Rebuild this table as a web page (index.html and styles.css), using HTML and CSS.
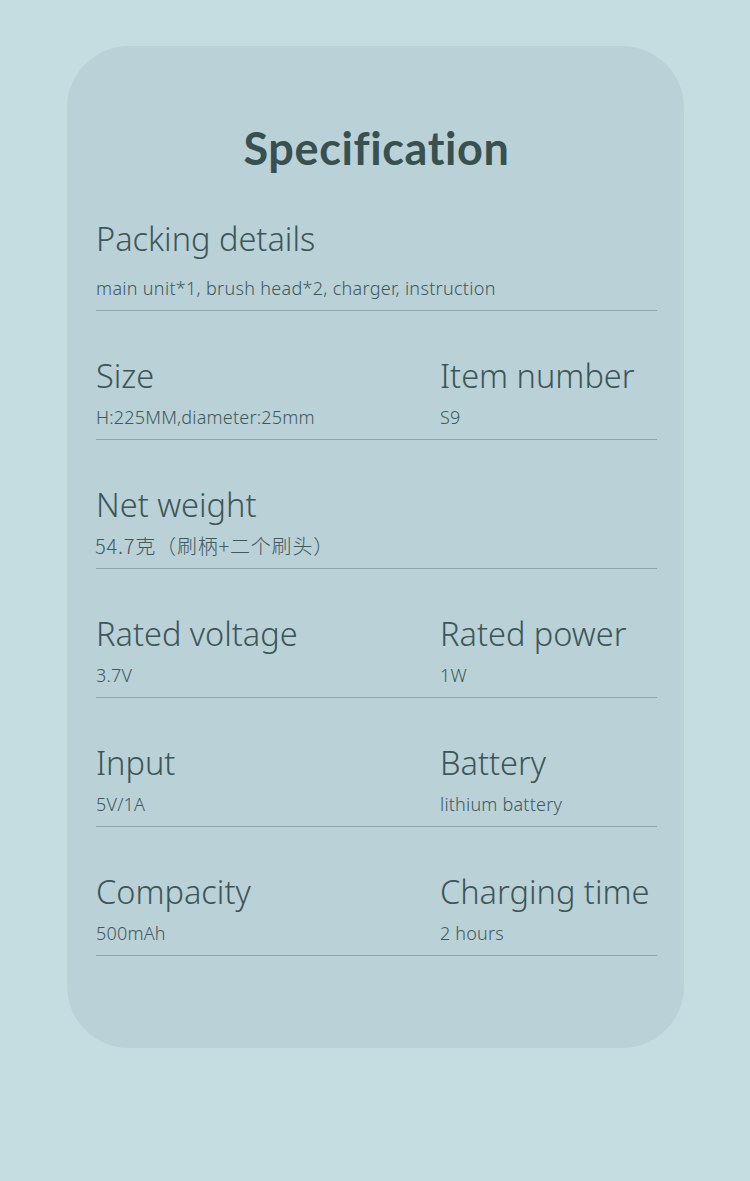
FILE: index.html
```html
<!DOCTYPE html>
<html lang="en">
<head>
<meta charset="utf-8">
<title>Specification</title>
<link rel="stylesheet" href="styles.css">
</head>
<body>
<main class="card">
  <h1 class="title">Specification</h1>
  <section class="row row-first">
    <div class="cell cell-wide">
      <div class="label">Packing details</div>
      <div class="value value-pack">main unit*1, brush head*2, charger, instruction</div>
    </div>
  </section>
  <section class="row">
    <div class="cell">
      <div class="label">Size</div>
      <div class="value">H:225MM,diameter:25mm</div>
    </div>
    <div class="cell">
      <div class="label">Item number</div>
      <div class="value">S9</div>
    </div>
  </section>
  <section class="row">
    <div class="cell cell-wide">
      <div class="label">Net weight</div>
      <div class="value cjk">54.7克（刷柄+二个刷头）</div>
    </div>
  </section>
  <section class="row">
    <div class="cell">
      <div class="label">Rated voltage</div>
      <div class="value">3.7V</div>
    </div>
    <div class="cell">
      <div class="label">Rated power</div>
      <div class="value">1W</div>
    </div>
  </section>
  <section class="row">
    <div class="cell">
      <div class="label">Input</div>
      <div class="value">5V/1A</div>
    </div>
    <div class="cell">
      <div class="label">Battery</div>
      <div class="value">lithium battery</div>
    </div>
  </section>
  <section class="row">
    <div class="cell">
      <div class="label">Compacity</div>
      <div class="value">500mAh</div>
    </div>
    <div class="cell">
      <div class="label">Charging time</div>
      <div class="value">2 hours</div>
    </div>
  </section>
</main>
</body>
</html>
```

FILE: styles.css
```css
html, body {
  margin: 0;
  padding: 0;
}
body {
  background: #c5dce0;
  width: 750px;
  height: 1181px;
  overflow: hidden;
  padding-top: 46px;
  box-sizing: border-box;
  font-family: "Noto Sans", "Noto Sans CJK SC", sans-serif;
  color: #3b5457;
}
.card {
  margin-left: 67px;
  width: 617px;
  height: 1002px;
  box-sizing: border-box;
  background: #b9d1d7;
  border-radius: 62px;
  padding: 0 27px 0 29px;
}
.title {
  margin: 0;
  padding-top: 72px;
  text-align: center;
  font-family: Lato, "Noto Sans", sans-serif;
  font-size: 45px;
  line-height: 60px;
  font-weight: 700;
  color: #38504f;
  letter-spacing: 0.6px;
}
.row {
  display: grid;
  grid-template-columns: 344px 1fr;
  border-bottom: 1px solid #8ea6ab;
  padding-top: 43px;
  padding-bottom: 8px;
}
.row-first {
  padding-top: 39px;
  padding-bottom: 8px;
}
.cell {
  display: flex;
  flex-direction: column;
}
.cell-wide {
  grid-column: 1 / -1;
}
.label {
  font-size: 32.5px;
  line-height: 44px;
  font-weight: 300;
  color: #3d5659;
  margin-bottom: 5px;
}
.value {
  font-size: 18px;
  line-height: 28px;
  font-weight: 300;
  color: #41595d;
  letter-spacing: 0.2px;
}
.value-pack {
  margin-top: 8px;
  letter-spacing: 0.3px;
}
.cjk {
  font-family: "Noto Sans CJK SC", sans-serif;
  font-size: 20px;
  font-weight: 300;
  letter-spacing: 0.8px;
  margin-left: -1px;
}
```
